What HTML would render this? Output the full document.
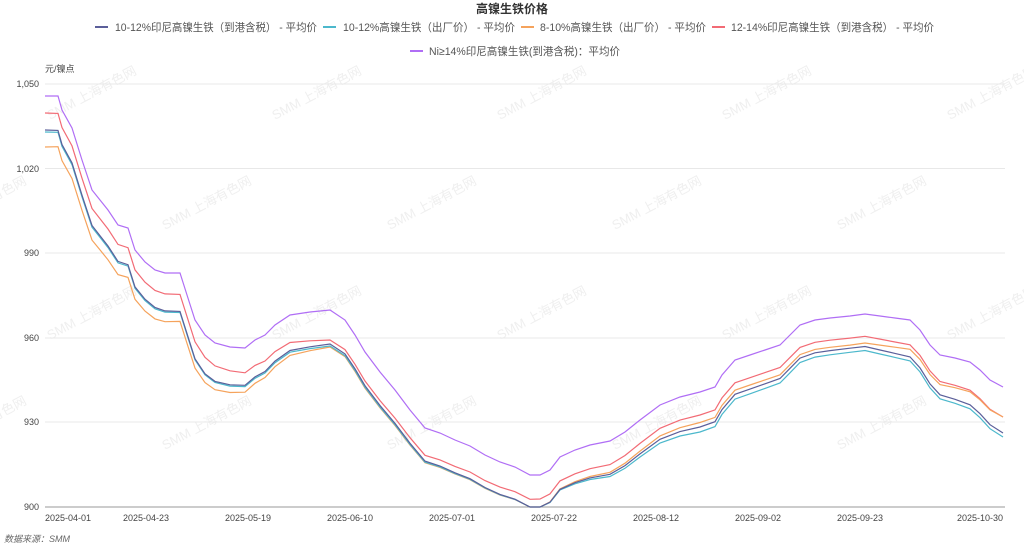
<!DOCTYPE html>
<html><head><meta charset="utf-8"><style>
html,body{margin:0;padding:0;background:#fff;}
body{width:1024px;height:549px;overflow:hidden;font-family:"Liberation Sans","Noto Sans CJK SC",sans-serif;}
</style></head><body>
<svg id="s" width="1024" height="549" xmlns="http://www.w3.org/2000/svg" style="font-family:'Liberation Sans','Noto Sans CJK SC',sans-serif">
<g id="wm" fill="#efefef" font-size="13"></g>
<text x="512" y="13" text-anchor="middle" font-size="12" font-weight="bold" fill="#333">高镍生铁价格</text>
<g font-size="11" fill="#555">
<line x1="95" y1="27" x2="108" y2="27" stroke="#5b5f9a" stroke-width="2"/>
<text x="115" y="31" textLength="202" lengthAdjust="spacingAndGlyphs">10-12%印尼高镍生铁（到港含税） - 平均价</text>
<line x1="323" y1="27" x2="336" y2="27" stroke="#4cb8cc" stroke-width="2"/>
<text x="343" y="31" textLength="172" lengthAdjust="spacingAndGlyphs">10-12%高镍生铁（出厂价） - 平均价</text>
<line x1="521" y1="27" x2="534" y2="27" stroke="#f5a35c" stroke-width="2"/>
<text x="540" y="31" textLength="166" lengthAdjust="spacingAndGlyphs">8-10%高镍生铁（出厂价） - 平均价</text>
<line x1="712" y1="27" x2="725" y2="27" stroke="#f26b75" stroke-width="2"/>
<text x="731" y="31" textLength="203" lengthAdjust="spacingAndGlyphs">12-14%印尼高镍生铁（到港含税） - 平均价</text>
<line x1="410" y1="51" x2="423" y2="51" stroke="#b06ef5" stroke-width="2"/>
<text x="429" y="55" textLength="191" lengthAdjust="spacingAndGlyphs">Ni≥14%印尼高镍生铁(到港含税)：平均价</text>
</g>
<text x="45" y="72" font-size="9" fill="#444">元/镍点</text>
<g stroke="#e8e8e8" stroke-width="1">
<line x1="45" y1="84" x2="1005" y2="84"/><line x1="45" y1="168.5" x2="1005" y2="168.5"/>
<line x1="45" y1="253" x2="1005" y2="253"/><line x1="45" y1="338" x2="1005" y2="338"/>
<line x1="45" y1="422" x2="1005" y2="422"/>
</g>
<line x1="45" y1="507" x2="1005" y2="507" stroke="#999" stroke-width="1"/>
<g font-size="9" fill="#444" text-anchor="end">
<text x="39" y="87">1,050</text><text x="39" y="172">1,020</text><text x="39" y="256">990</text>
<text x="39" y="341">960</text><text x="39" y="425">930</text><text x="39" y="510">900</text>
</g>
<g font-size="9" fill="#444">
<text x="45" y="521">2025-04-01</text><text x="123" y="521">2025-04-23</text><text x="225" y="521">2025-05-19</text>
<text x="327" y="521">2025-06-10</text><text x="429" y="521">2025-07-01</text><text x="531" y="521">2025-07-22</text>
<text x="633" y="521">2025-08-12</text><text x="735" y="521">2025-09-02</text><text x="837" y="521">2025-09-23</text>
<text x="957" y="521">2025-10-30</text>
</g>
<text x="4" y="542" font-size="9" fill="#666" font-style="italic">数据来源：SMM</text>
<g id="lines" fill="none" stroke-width="1.2"></g>
</svg>
<script>
var P=[[45,96],[58,96],[62,110],[72,128],[82,160],[92,190],[100,200],[108,210],[118,225],[128,228],[135,250],[145,262],[155,270],[165,273],[180,273],[187,295],[195,320],[205,335],[215,343],[230,347],[245,348],[255,340],[265,335],[275,325],[290,315],[310,312],[330,310],[345,320],[355,335],[365,352],[380,372],[395,390],[410,410],[425,428],[440,433],[455,440],[470,446],[485,455],[500,462],[515,467],[530,475],[540,475],[550,470],[560,457],[575,450],[590,445],[610,441],[625,432],[640,420],[660,405],[680,397],[700,392],[715,387],[722,375],[735,360],[750,355],[765,350],[780,345],[790,335],[800,325],[815,320],[830,318],[850,316],[865,314],[880,316],[895,318],[910,320],[920,330],[930,345],[940,355],[955,358],[970,362],[980,370],[990,380],[1003,387]];
var S=[
 ["#f26b75",[[45,17],[200,22],[330,30],[540,24],[860,22],[1003,30]]],
 ["#f5a35c",[[45,51],[200,48],[330,37],[540,32],[860,29],[1003,30]]],
 ["#4cb8cc",[[45,36],[200,40],[330,36],[540,32],[700,40],[860,36],[1003,50]]],
 ["#5b5f9a",[[45,34],[200,39],[330,34],[540,32],[700,35],[860,32],[1003,46]]],
 ["#b06ef5",[[45,0],[1003,0]]]
];
function off(o,x){for(var i=1;i<o.length;i++){if(x<=o[i][0]){var a=o[i-1],b=o[i];return a[1]+(b[1]-a[1])*(x-a[0])/(b[0]-a[0]);}}return o[o.length-1][1];}
var g=document.getElementById('lines'),h='';
S.forEach(function(s){var pts=P.map(function(p){var y=Math.min(507,p[1]+off(s[1],p[0]));return p[0]+','+y.toFixed(1);}).join(' ');h+='<polyline stroke="'+s[0]+'" points="'+pts+'"/>';});
g.innerHTML=h;
var w=document.getElementById('wm'),t='';
var rows=[[120,50],[230,-60],[340,50],[450,-60]];
rows.forEach(function(r){for(var x=r[1];x<1100;x+=225){t+='<text x="'+x+'" y="'+r[0]+'" transform="rotate(-28 '+x+' '+r[0]+')">SMM 上海有色网</text>';}});
w.innerHTML=t;
</script>
</body></html>
